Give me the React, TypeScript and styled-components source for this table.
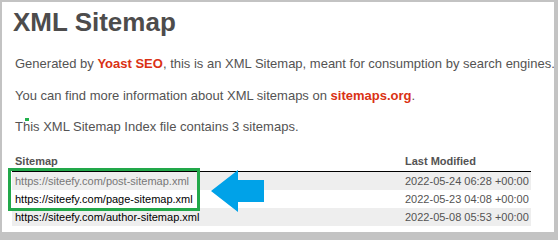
import React from 'react';
import styled, { createGlobalStyle } from 'styled-components';

const GlobalStyle = createGlobalStyle`
  html, body {
    margin: 0;
    padding: 0;
    background: #c3c3c3;
  }
  body {
    font-family: "Liberation Sans", Arial, Helvetica, sans-serif;
    font-size: 13px;
    color: #545353;
  }
`;

const Frame = styled.div`
  position: relative;
  box-sizing: border-box;
  width: 552px;
  height: 230px;
  margin: 2px 4px 8px 2px;
  background: #fff;
  padding: 0 0 0 11px;
  overflow: hidden;
`;

const Title = styled.h1`
  margin: 0;
  padding-top: 4px;
  font-size: 26px;
  line-height: 32px;
  font-weight: bold;
  color: #4d4c4c;
`;

const Expl = styled.p`
  margin: 18px 2px 0;
  line-height: 15.6px;
  white-space: nowrap;
  & + & {
    margin-top: 16px;
  }
`;

const BrandLink = styled.a`
  color: #da3114;
  font-weight: bold;
  text-decoration: none;
`;

const Mark = styled.span`
  position: absolute;
  width: 4px;
  height: 3px;
  background: #22b14c;
  margin-left: 2px;
  margin-top: -1px;
`;

const Table = styled.table`
  margin-top: 20px;
  margin-left: -1px;
  width: 519px;
  border: none;
  border-collapse: collapse;
  font-size: 11px;
`;

const Th = styled.th<{ $w?: number }>`
  text-align: left;
  font-weight: bold;
  padding: 0 0 4px 3px;
  border-bottom: 1px solid #000;
  color: #545353;
  width: ${(p) => (p.$w ? `${p.$w}px` : 'auto')};
`;

const Row = styled.tr<{ $odd: boolean }>`
  background: ${(p) => (p.$odd ? '#eee' : '#fff')};
  height: 18px;
`;

const Td = styled.td`
  padding: 0 0 0 3px;
  height: 18px;
  white-space: nowrap;
`;

const UrlLink = styled.a<{ $visited?: boolean }>`
  color: ${(p) => (p.$visited ? '#777' : '#000')};
  text-decoration: none;
`;

const Highlight = styled.div`
  position: absolute;
  left: 6px;
  top: 166px;
  width: 192px;
  height: 43px;
  box-sizing: border-box;
  border: 3px solid #22a84a;
`;

const Arrow = styled.svg`
  position: absolute;
  left: 207px;
  top: 166px;
`;

const rows = [
  { url: 'https://siteefy.com/post-sitemap.xml', date: '2022-05-24 06:28 +00:00', visited: true },
  { url: 'https://siteefy.com/page-sitemap.xml', date: '2022-05-23 04:08 +00:00' },
  { url: 'https://siteefy.com/author-sitemap.xml', date: '2022-05-08 05:53 +00:00' },
];

export default function App() {
  return (
    <>
      <GlobalStyle />
      <Frame>
        <Title>XML Sitemap</Title>
        <Expl>
          Generated by <BrandLink href="#">Yoast SEO</BrandLink>, this is an XML Sitemap, meant for
          consumption by search engines.
        </Expl>
        <Expl>
          You can find more information about XML sitemaps on{' '}
          <BrandLink href="#">sitemaps.org</BrandLink>.
        </Expl>
        <Expl>
          T<Mark />his XML Sitemap Index file contains 3 sitemaps.
        </Expl>
        <Table>
          <thead>
            <tr>
              <Th $w={387}>Sitemap</Th>
              <Th>Last Modified</Th>
            </tr>
          </thead>
          <tbody>
            {rows.map((r, i) => (
              <Row key={r.url} $odd={i % 2 === 0}>
                <Td>
                  <UrlLink href="#" $visited={r.visited}>
                    {r.url}
                  </UrlLink>
                </Td>
                <Td>{r.date}</Td>
              </Row>
            ))}
          </tbody>
        </Table>
        <Highlight />
        <Arrow width="60" height="46" viewBox="0 0 60 46">
          <polygon points="2,23 29,2 29,12 55,12 55,34 29,34 29,44" fill="#00a2e8" />
        </Arrow>
      </Frame>
    </>
  );
}
